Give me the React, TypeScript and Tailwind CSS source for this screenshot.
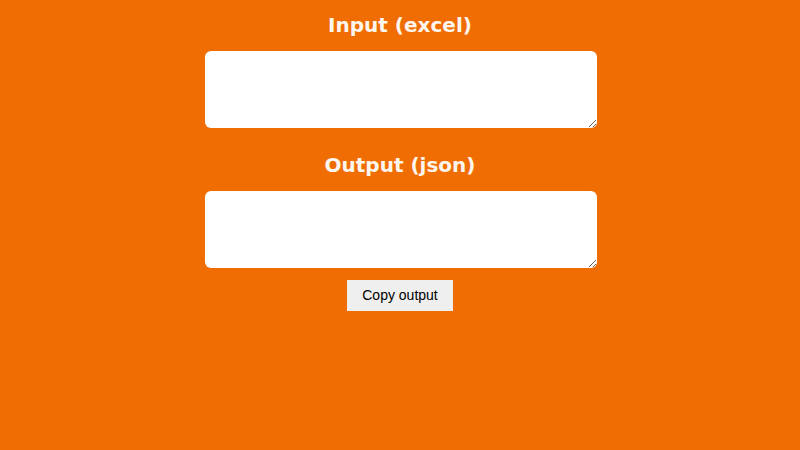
import React, { useState } from 'react';

const App: React.FC = () => {
    const [input, setInput] = useState('');
    const [output, setOutput] = useState('');

    const handleCopy = () => {
        navigator.clipboard?.writeText(output).catch(() => {});
    };

    return (
        <div className="min-h-screen w-full bg-[#f06d04] flex flex-col items-center pt-3 font-['DejaVu_Sans',sans-serif]">
            <h2 className="text-[20px] leading-[26px] font-bold text-[#fdf6ee] mb-[13px]">Input (excel)</h2>
            <textarea
                value={input}
                onChange={(e) => setInput(e.target.value)}
                className="ml-[2px] w-[392px] h-[77px] bg-white rounded-md outline-none p-2 text-sm text-black"
            />
            <h2 className="text-[20px] leading-[26px] font-bold text-[#fdf6ee] mt-6 mb-[13px]">Output (json)</h2>
            <textarea
                value={output}
                onChange={(e) => setOutput(e.target.value)}
                className="ml-[2px] w-[392px] h-[77px] bg-white rounded-md outline-none p-2 text-sm text-black"
            />
            <button
                onClick={handleCopy}
                className="mt-3 w-[106px] h-[31px] bg-[#efefef] text-black text-[14px] font-['Liberation_Sans',Arial,sans-serif]"
            >
                Copy output
            </button>
        </div>
    );
};

export default App;
